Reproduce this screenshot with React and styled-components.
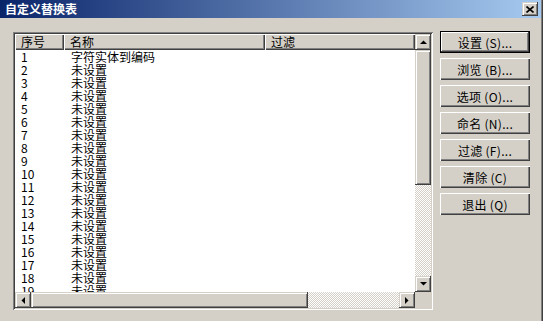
import React from "react";
import styled, { createGlobalStyle, css } from "styled-components";

const GlobalStyle = createGlobalStyle`
  html, body {
    margin: 0;
    padding: 0;
    background: #d4d0c8;
    overflow: hidden;
  }
  body {
    font-family: "Noto Sans CJK SC", "Noto Sans", sans-serif;
    font-size: 12px;
    color: #000;
  }
`;

// classic 3d edges
const raisedButton = css`
  background: #d4d0c8;
  box-shadow: inset 1px 1px #ffffff, inset -1px -1px #404040,
    inset -2px -2px #808080;
`;
const raisedScroll = css`
  background: #d4d0c8;
  box-shadow: inset -1px -1px #404040, inset 1px 1px #d4d0c8,
    inset 2px 2px #ffffff, inset -2px -2px #808080;
`;
const checker = css`
  background: repeating-conic-gradient(#d4d0c8 0 25%, #ffffff 0 50%) 0 0 / 2px 2px;
`;

const Window = styled.div`
  width: 543px;
  height: 321px;
  box-sizing: border-box;
  display: flex;
  flex-direction: column;
  background: #d4d0c8;
  box-shadow: inset -1px 0 #404040, inset -2px 0 #808080;
`;

const TitleBar = styled.div`
  height: 18px;
  margin-right: 2px;
  display: flex;
  align-items: center;
  justify-content: space-between;
  padding: 0 3px 0 5px;
  background: linear-gradient(to right, #0a246a, #a6caf0);
`;

const Title = styled.span`
  color: #fff;
  font-weight: bold;
  font-size: 12px;
  line-height: 18px;
`;

const CloseButton = styled.div`
  ${raisedScroll};
  width: 16px;
  height: 14px;
  display: flex;
  align-items: center;
  justify-content: center;
`;

const Body = styled.div`
  display: flex;
  align-items: flex-start;
  gap: 7px;
  padding: 14px 0 0 13px;
`;

const ListFrame = styled.div`
  width: 420px;
  height: 278px;
  box-sizing: border-box;
  padding: 2px;
  background: #fff;
  box-shadow: inset 1px 1px #808080, inset -1px -1px #ffffff,
    inset 2px 2px #404040, inset -2px -2px #d4d0c8;
  display: grid;
  grid-template-columns: 400px 16px;
  grid-template-rows: 258px 16px;
`;

const Content = styled.div`
  overflow: hidden;
  background: #fff;
  display: flex;
  flex-direction: column;
`;

const HeaderRow = styled.div`
  display: flex;
  height: 16px;
  flex-shrink: 0;
`;

const HeaderCell = styled.div`
  ${raisedButton};
  box-sizing: border-box;
  width: ${(p) => (p.$w ? `${p.$w}px` : "auto")};
  flex: ${(p) => (p.$w ? "none" : 1)};
  padding-left: 6px;
  line-height: 15px;
  white-space: nowrap;
`;

const Row = styled.div`
  display: flex;
  height: 13px;
  line-height: 13px;
  flex-shrink: 0;
`;

const Cell = styled.div`
  width: ${(p) => p.$w}px;
  box-sizing: border-box;
  padding-left: ${(p) => p.$pad}px;
  white-space: nowrap;
`;

const VScroll = styled.div`
  display: flex;
  flex-direction: column;
`;

const HScroll = styled.div`
  display: flex;
`;

const ScrollButton = styled.div`
  ${raisedScroll};
  width: 16px;
  height: 16px;
  flex-shrink: 0;
  display: flex;
  align-items: center;
  justify-content: center;
`;

const Thumb = styled.div`
  ${raisedScroll};
  flex-shrink: 0;
  width: ${(p) => (p.$vertical ? "16px" : `${p.$size}px`)};
  height: ${(p) => (p.$vertical ? `${p.$size}px` : "16px")};
`;

const Track = styled.div`
  ${checker};
  flex: 1;
`;

const Corner = styled.div`
  background: #d4d0c8;
`;

const Buttons = styled.div`
  display: flex;
  flex-direction: column;
  gap: 5px;
  margin-top: -1px;
`;

const Button = styled.div`
  ${raisedButton};
  width: 90px;
  height: 22px;
  box-sizing: border-box;
  display: flex;
  align-items: center;
  justify-content: center;
  font-size: 12px;
  letter-spacing: 0.3px;
  ${(p) =>
    p.$default &&
    css`
      box-shadow: inset 0 0 0 1px #000000, inset -2px -2px #404040,
        inset 2px 2px #ffffff, inset -3px -3px #808080;
    `}
`;

const Arrow = ({ dir }) => {
  const pts = {
    up: "0,4 7,4 3.5,0.5",
    down: "0,0 7,0 3.5,3.5",
    left: "4,0 4,7 0.5,3.5",
    right: "0,0 0,7 3.5,3.5",
  }[dir];
  const vertical = dir === "up" || dir === "down";
  return (
    <svg width={vertical ? 7 : 4} height={vertical ? 4 : 7} viewBox={vertical ? "0 0 7 4" : "0 0 4 7"}>
      <polygon points={pts} fill="#000" />
    </svg>
  );
};

const rows = [
  { n: 1, name: "字符实体到编码" },
  ...Array.from({ length: 19 }, (_, i) => ({ n: i + 2, name: "未设置" })),
];

const actions = [
  "设置 (S)...",
  "浏览 (B)...",
  "选项 (O)...",
  "命名 (N)...",
  "过滤 (F)...",
  "清除 (C)",
  "退出 (Q)",
];

const App = () => {
  return (
    <Window>
      <GlobalStyle />
      <TitleBar>
        <Title>自定义替换表</Title>
        <CloseButton>
          <svg width="8" height="7" viewBox="0 0 8 7">
            <path d="M0.5 0.5 L7.5 6.5 M7.5 0.5 L0.5 6.5" stroke="#000" strokeWidth="1.6" />
          </svg>
        </CloseButton>
      </TitleBar>
      <Body>
        <ListFrame>
          <Content>
            <HeaderRow>
              <HeaderCell $w={49}>序号</HeaderCell>
              <HeaderCell $w={201}>名称</HeaderCell>
              <HeaderCell>过滤</HeaderCell>
            </HeaderRow>
            {rows.map((r) => (
              <Row key={r.n}>
                <Cell $w={49} $pad={6}>
                  {r.n}
                </Cell>
                <Cell $w={201} $pad={7}>
                  {r.name}
                </Cell>
              </Row>
            ))}
          </Content>
          <VScroll>
            <ScrollButton>
              <Arrow dir="up" />
            </ScrollButton>
            <Thumb $vertical $size={135} />
            <Track />
            <ScrollButton>
              <Arrow dir="down" />
            </ScrollButton>
          </VScroll>
          <HScroll>
            <ScrollButton>
              <Arrow dir="left" />
            </ScrollButton>
            <Thumb $size={277} />
            <Track />
            <ScrollButton>
              <Arrow dir="right" />
            </ScrollButton>
          </HScroll>
          <Corner />
        </ListFrame>
        <Buttons>
          {actions.map((a, i) => (
            <Button key={a} $default={i === 0}>
              {a}
            </Button>
          ))}
        </Buttons>
      </Body>
    </Window>
  );
};

export default App;
